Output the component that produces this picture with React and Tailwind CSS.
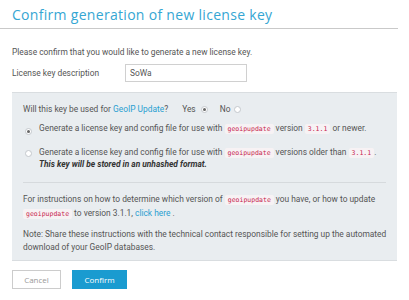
import React from 'react';

const Code = ({ children }) => (
    <code className="rounded-[2px] bg-[#f7f2f4] px-[3px] py-[1px] text-[6.5px] leading-[8px] text-[#c7254e] [font-family:'DejaVu_Sans_Mono',monospace]">
        {children}
    </code>
);

const Radio = ({ checked }) => (
    <span className="inline-flex h-[7px] w-[7px] items-center justify-center rounded-full border border-[#c4c8cc] bg-white">
        {checked && <span className="h-[3px] w-[3px] rounded-full bg-[#666]"></span>}
    </span>
);

const App = () => {
    return (
        <div className="w-[409px] h-[300px] overflow-hidden bg-white text-[8.4px] leading-[12px] text-[#555] [font-family:Roboto,sans-serif]">
            {/* Header */}
            <div className="w-[398px] border-b border-[#c9c9c9] pl-3 pt-[5px] pb-[4px]">
                <h1 className="text-[14px] leading-[19px] text-[#35a6d3] [font-family:'Open_Sans',sans-serif] tracking-[0.3px]">
                    Confirm generation of new license key
                </h1>
            </div>

            <div className="w-[398px] pl-3 pr-[1px]">
                <p className="mt-[17px]">Please confirm that you would like to generate a new license key.</p>

                <div className="mt-[6px] flex items-center">
                    <span className="w-[113px]">License key description</span>
                    <div className="flex h-[18px] w-[122px] items-center border border-[#d0d0d0] px-[4px] text-[#555]">SoWa</div>
                </div>

                {/* Panel */}
                <div className="mt-[10px] border-t border-b border-[#d9dde0] bg-[#e9edf0] pl-[11px] pr-[4px] pt-[10px] pb-[6px]">
                    <div className="flex items-center">
                        <span>
                            Will this key be used for <span className="text-[#2a9fd0]">GeoIP Update</span>?
                        </span>
                        <span className="ml-[14px] mr-[5px]">Yes</span>
                        <Radio checked />
                        <span className="ml-[12px] mr-[4px]">No</span>
                        <Radio />
                    </div>

                    <div className="mt-[7px] flex items-start gap-[7px] pl-[2px]">
                        <span className="mt-[2px]"><Radio checked /></span>
                        <span>
                            Generate a license key and config file for use with <Code>geoipupdate</Code> version <Code>3.1.1</Code> or newer.
                        </span>
                    </div>

                    <div className="mt-[10px] flex items-start gap-[7px] pl-[2px]">
                        <span className="mt-[2px]"><Radio /></span>
                        <span>
                            Generate a license key and config file for use with <Code>geoipupdate</Code> versions older than <Code>3.1.1</Code>.
                            <br />
                            <b className="italic text-[#333]">This key will be stored in an unhashed format.</b>
                        </span>
                    </div>

                    <div className="mt-[12px] mr-[7px] border-t border-[#d6dadd]"></div>

                    <p className="mt-[9px] leading-[14px]">
                        For instructions on how to determine which version of <Code>geoipupdate</Code> you have, or how to update
                        <br />
                        <Code>geoipupdate</Code> to version 3.1.1, <span className="text-[#2a9fd0]">click here</span> .
                    </p>

                    <p className="mt-[8px] leading-[13px]">
                        Note: Share these instructions with the technical contact responsible for setting up the automated download of your GeoIP databases.
                    </p>
                </div>

                {/* Buttons */}
                <div className="mt-[9px] flex gap-[11px] [font-family:'Open_Sans',sans-serif]">
                    <button className="h-[19px] w-[49px] border border-[#ccc] bg-white text-[8px] text-[#999]">Cancel</button>
                    <button className="h-[19px] w-[55px] bg-[#1a9bd0] text-[8px] text-white">Confirm</button>
                </div>
            </div>
        </div>
    );
};

export default App;
